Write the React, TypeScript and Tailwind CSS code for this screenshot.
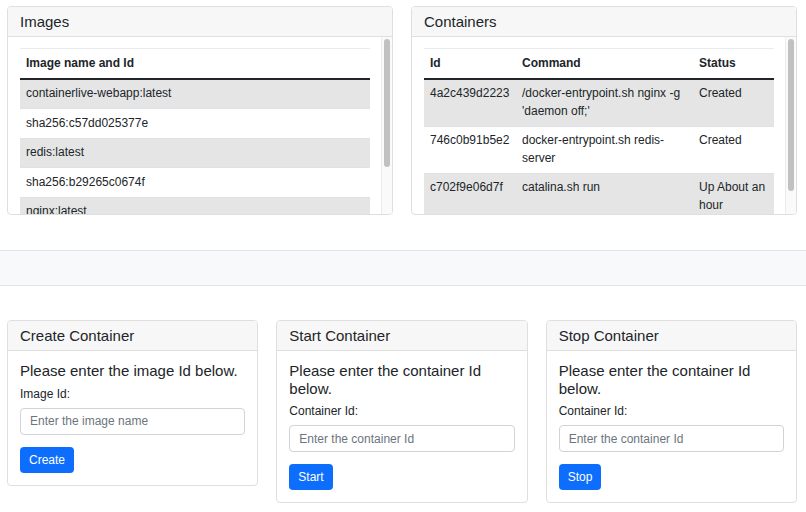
import React from "react";

function Scrollbar({ thumb }: { thumb: string }) {
  return (
    <div className="relative w-[11px] shrink-0 border-l border-[#ececec] bg-[#fafafa]">
      <div className={`absolute left-[2px] top-[2px] w-[6px] rounded-full bg-[#c1c1c1] ${thumb}`} />
    </div>
  );
}

function CardHeader({ title }: { title: string }) {
  return (
    <div className="flex h-[30px] shrink-0 items-center border-b border-[#dfdfdf] bg-[#f7f7f7] px-[12px] text-[15px] leading-[18px]">
      {title}
    </div>
  );
}

const images = [
  "containerlive-webapp:latest",
  "sha256:c57dd025377e",
  "redis:latest",
  "sha256:b29265c0674f",
  "nginx:latest",
  "sha256:a1b2c3d4e5f6",
];

const containers = [
  { id: "4a2c439d2223", cmd: "/docker-entrypoint.sh nginx -g 'daemon off;'", status: "Created" },
  { id: "746c0b91b5e2", cmd: "docker-entrypoint.sh redis-server", status: "Created" },
  { id: "c702f9e06d7f", cmd: "catalina.sh run", status: "Up About an hour" },
];

const cell = "px-[6px] py-[5.5px] text-left align-top leading-[17.5px]";

function ActionCard({
  title,
  heading,
  label,
  placeholder,
  button,
}: {
  title: string;
  heading: string;
  label: string;
  placeholder: string;
  button: string;
}) {
  return (
    <div className="flex min-w-0 flex-1 flex-col overflow-hidden rounded-[4px] border border-[#dfdfdf]">
      <CardHeader title={title} />
      <div className="px-[12px] pb-[12px] pt-[11px]">
        <div className="mb-[5px] text-[15px] leading-[17.5px]">{heading}</div>
        <label className="mb-[5px] block text-[12px] leading-[18px]">{label}</label>
        <input
          className="block h-[27px] w-full rounded-[4px] border border-[#ced4da] px-[9px] text-[12px] outline-none placeholder:text-[#6c757d]"
          placeholder={placeholder}
        />
        <button className="mt-[12px] h-[26px] rounded-[4px] bg-[#0d6efd] px-[9px] text-[12px] text-white">
          {button}
        </button>
      </div>
    </div>
  );
}

export default function App() {
  return (
    <div className="h-[512px] w-[806px] overflow-hidden bg-white pt-[6px] font-['Liberation_Sans',Arial,sans-serif] text-[#212529]">
      <div className="flex gap-[18px] pl-[7px] pr-[9px]">
        <div className="flex h-[209px] min-w-0 flex-1 flex-col overflow-hidden rounded-[4px] border border-[#dfdfdf]">
          <CardHeader title="Images" />
          <div className="flex min-h-0 flex-1">
            <div className="min-w-0 flex-1 overflow-hidden pl-[12px] pr-[11px] pt-[11px]">
              <table className="w-full border-collapse text-[12px]">
                <thead>
                  <tr className="border-t border-[#e9ecef]">
                    <th className={`${cell} border-b-2 border-[#212529] font-bold`}>Image name and Id</th>
                  </tr>
                </thead>
                <tbody>
                  {images.map((img, i) => (
                    <tr key={img} className={i % 2 === 0 ? "bg-[#e5e5e5]" : "bg-white"}>
                      <td className={`${cell} border-b border-[#dee2e6]`}>{img}</td>
                    </tr>
                  ))}
                </tbody>
              </table>
            </div>
            <Scrollbar thumb="h-[128px]" />
          </div>
        </div>

        <div className="flex h-[209px] min-w-0 flex-1 flex-col overflow-hidden rounded-[4px] border border-[#dfdfdf]">
          <CardHeader title="Containers" />
          <div className="flex min-h-0 flex-1">
            <div className="min-w-0 flex-1 overflow-hidden pl-[12px] pr-[11px] pt-[11px]">
              <table className="w-full table-fixed border-collapse text-[12px]">
                <colgroup>
                  <col className="w-[92px]" />
                  <col className="w-[177px]" />
                  <col />
                </colgroup>
                <thead>
                  <tr className="border-t border-[#e9ecef]">
                    <th className={`${cell} border-b-2 border-[#212529] font-bold`}>Id</th>
                    <th className={`${cell} border-b-2 border-[#212529] font-bold`}>Command</th>
                    <th className={`${cell} border-b-2 border-[#212529] font-bold`}>Status</th>
                  </tr>
                </thead>
                <tbody>
                  {containers.map((c, i) => (
                    <tr key={c.id} className={i % 2 === 0 ? "bg-[#e5e5e5]" : "bg-white"}>
                      <td className={`${cell} border-b border-[#dee2e6]`}>{c.id}</td>
                      <td className={`${cell} border-b border-[#dee2e6]`}>{c.cmd}</td>
                      <td className={`${cell} border-b border-[#dee2e6]`}>{c.status}</td>
                    </tr>
                  ))}
                </tbody>
              </table>
            </div>
            <Scrollbar thumb="h-[152px]" />
          </div>
        </div>
      </div>

      <div className="mt-[35px] h-[36px] border-y border-[#e3e5e8] bg-[#f8f9fa]" />

      <div className="mt-[34px] flex items-start gap-[18px] pl-[7px] pr-[9px]">
        <ActionCard
          title="Create Container"
          heading="Please enter the image Id below."
          label="Image Id:"
          placeholder="Enter the image name"
          button="Create"
        />
        <ActionCard
          title="Start Container"
          heading="Please enter the container Id below."
          label="Container Id:"
          placeholder="Enter the container Id"
          button="Start"
        />
        <ActionCard
          title="Stop Container"
          heading="Please enter the container Id below."
          label="Container Id:"
          placeholder="Enter the container Id"
          button="Stop"
        />
      </div>
    </div>
  );
}
